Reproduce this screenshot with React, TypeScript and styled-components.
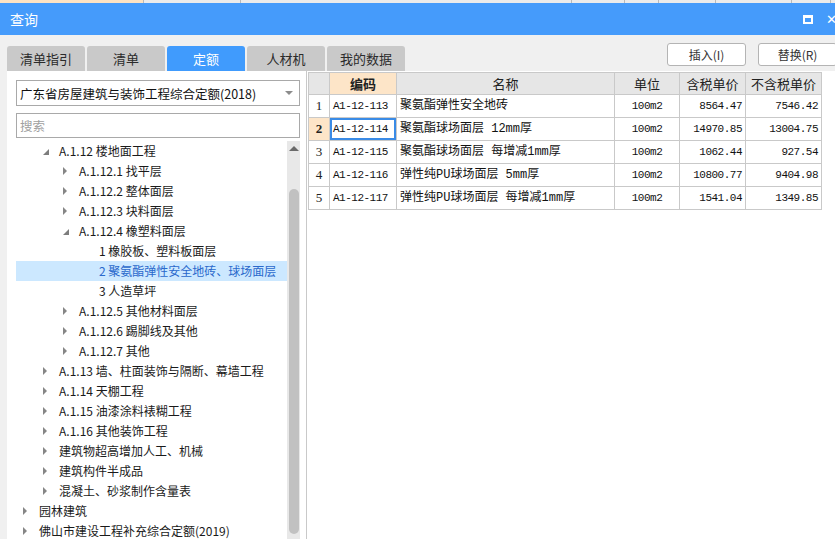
import React from 'react';
import styled, { createGlobalStyle } from 'styled-components';

const GlobalStyle = createGlobalStyle`
  html, body {
    margin: 0;
    padding: 0;
    overflow: hidden;
    background: #f0f0f0;
  }
  body {
    font-family: "Noto Sans CJK SC", "Noto Sans", sans-serif;
  }
  * { box-sizing: border-box; }
`;

const Window = styled.div`
  width: 835px;
  height: 539px;
  display: flex;
  flex-direction: column;
  background: #f0f0f0;
  overflow: hidden;
`;

const BackStrip = styled.div`
  display: flex;
  height: 3px;
  background: #e9e9e9;
`;

const BackCell = styled.div<{ $w: number; $hl?: boolean }>`
  width: ${(p) => p.$w}px;
  flex-shrink: 0;
  background: ${(p) => (p.$hl ? '#fde3c3' : '#ebebeb')};
  border-right: 1px solid #b9b9b9;
`;

const TitleBar = styled.div`
  height: 32px;
  background: #459bfb;
  color: #fff;
  display: flex;
  align-items: center;
  padding-left: 10px;
  font-size: 14px;
  overflow: hidden;
`;

const TitleText = styled.span`
  flex: 1;
`;

const MaxIcon = styled.span`
  flex-shrink: 0;
  width: 10px;
  height: 9px;
  border: 2px solid #fff;
  border-top-width: 3px;
  margin-right: 13px;
`;

const CloseIcon = styled.span`
  flex-shrink: 0;
  width: 12px;
  margin-right: -3px;
  font-family: "DejaVu Sans", sans-serif;
  font-size: 13px;
  font-weight: 700;
  line-height: 1;
  color: #fff;
`;

const TopRow = styled.div`
  height: 36px;
  display: flex;
  justify-content: space-between;
`;

const Tabs = styled.div`
  align-self: flex-end;
  display: flex;
  gap: 2px;
  padding-left: 7px;
`;

const Tab = styled.div<{ $active?: boolean }>`
  width: 78px;
  height: 25px;
  border-radius: 3px 3px 0 0;
  background: ${(p) => (p.$active ? '#409bfd' : '#c9c9c9')};
  color: ${(p) => (p.$active ? '#fff' : '#2b2b2b')};
  font-size: 13px;
  display: flex;
  align-items: center;
  justify-content: center;
`;

const Buttons = styled.div`
  display: flex;
  gap: 12px;
  margin-top: 8px;
  margin-right: -2px;
  align-self: flex-start;
`;

const Button = styled.div`
  width: 79px;
  height: 23px;
  background: #fff;
  border: 1px solid #b4b4b4;
  border-radius: 3px;
  font-size: 12px;
  color: #333;
  display: flex;
  align-items: center;
  justify-content: center;
`;

const Body = styled.div`
  flex: 1;
  display: flex;
  min-height: 0;
  padding-left: 7px;
`;

const LeftPanel = styled.div`
  width: 299px;
  background: #fff;
  display: flex;
  flex-direction: column;
  padding: 9px 6px 0 9px;
`;

const Select = styled.div`
  height: 26px;
  border: 1px solid #a9a9a9;
  display: flex;
  align-items: center;
  justify-content: space-between;
  padding: 0 6px 0 3px;
  font-size: 12.5px;
  color: #111;
`;

const SelectArrow = styled.span`
  width: 0;
  height: 0;
  border-left: 4px solid transparent;
  border-right: 4px solid transparent;
  border-top: 4px solid #8c8c8c;
`;

const Search = styled.input`
  margin-top: 7px;
  height: 25px;
  border: 1px solid #a9a9a9;
  padding: 0 0 0 3px;
  font-family: inherit;
  font-size: 12.5px;
  outline: none;
  &::placeholder { color: #a0a0a0; }
`;

const TreeArea = styled.div`
  margin-top: 3px;
  flex: 1;
  display: flex;
  min-height: 0;
  overflow: hidden;
`;

const TreeList = styled.div`
  width: 271px;
  display: flex;
  flex-direction: column;
`;

const TreeRow = styled.div<{ $selected?: boolean }>`
  height: 20px;
  flex-shrink: 0;
  display: flex;
  align-items: center;
  font-size: 12px;
  line-height: 20px;
  white-space: nowrap;
  color: ${(p) => (p.$selected ? '#2a69cc' : '#1a1a1a')};
  background: ${(p) => (p.$selected ? '#cce8ff' : 'transparent')};
`;

const Toggle = styled.span<{ $level: number }>`
  width: 23px;
  margin-left: ${(p) => p.$level * 20}px;
  height: 20px;
  flex-shrink: 0;
  display: flex;
  align-items: center;
  padding-left: 7px;
`;

const Collapsed = styled.span`
  width: 0;
  height: 0;
  border-top: 4px solid transparent;
  border-bottom: 4px solid transparent;
  border-left: 4px solid #868686;
`;

const Expanded = styled.span`
  width: 0;
  height: 0;
  margin-top: 2px;
  border-left: 6px solid transparent;
  border-bottom: 6px solid #7d7d7d;
`;

const ScrollBar = styled.div`
  width: 13px;
  background: #e8e8e8;
  display: flex;
  flex-direction: column;
  align-items: center;
`;

const ScrollUp = styled.div`
  height: 15px;
  display: flex;
  align-items: center;
  &::after {
    content: '';
    border-left: 5px solid transparent;
    border-right: 5px solid transparent;
    border-bottom: 5px solid #6a6a6a;
  }
`;

const ScrollThumb = styled.div`
  margin-top: 33px;
  width: 10px;
  height: 345px;
  flex-shrink: 0;
  border-radius: 5px;
  background: #c1c1c1;
`;

const RightPanel = styled.div`
  flex: 1;
  background: #fff;
  border-left: 1px solid #c9c9c9;
  padding: 1px 0 0 1px;
`;

const Grid = styled.table`
  border-collapse: collapse;
  table-layout: fixed;
  width: 513px;
  border: 1px solid #c6c6c6;
`;

const HeadCell = styled.th<{ $active?: boolean }>`
  height: 22px;
  padding: 0;
  border: 1px solid #c9c9c9;
  background: ${(p) => (p.$active ? '#fde5c8' : '#e6e6e6')};
  font-size: 13px;
  font-weight: ${(p) => (p.$active ? 700 : 400)};
  color: #222;
  line-height: 20px;
`;

const Cell = styled.td<{ $align?: 'left' | 'center' | 'right'; $focus?: boolean; $mono?: boolean }>`
  height: 23px;
  padding: 0 3px;
  border: 1px solid #c9c9c9;
  text-align: ${(p) => p.$align || 'left'};
  font-family: "Liberation Mono", "Noto Sans CJK SC", monospace;
  font-size: ${(p) => (p.$mono ? '11px' : '12px')};
  letter-spacing: ${(p) => (p.$mono ? '-0.5px' : '0')};
  color: #111;
  white-space: nowrap;
  overflow: hidden;
  line-height: 20px;
  box-shadow: ${(p) => (p.$focus ? 'inset 0 0 0 2px #3a8be6' : 'none')};
`;

const NumCell = styled.td<{ $active?: boolean }>`
  height: 23px;
  padding: 0;
  border: 1px solid #c9c9c9;
  text-align: center;
  font-family: "Liberation Serif", serif;
  font-size: 13px;
  font-weight: ${(p) => (p.$active ? 700 : 400)};
  background: ${(p) => (p.$active ? '#fde5c8' : '#fff')};
  color: #222;
`;

type Node = { level: number; label: string; state: 'open' | 'closed' | 'leaf'; selected?: boolean };

const tree: Node[] = [
  { level: 1, label: 'A.1.12 楼地面工程', state: 'open' },
  { level: 2, label: 'A.1.12.1 找平层', state: 'closed' },
  { level: 2, label: 'A.1.12.2 整体面层', state: 'closed' },
  { level: 2, label: 'A.1.12.3 块料面层', state: 'closed' },
  { level: 2, label: 'A.1.12.4 橡塑料面层', state: 'open' },
  { level: 3, label: '1 橡胶板、塑料板面层', state: 'leaf' },
  { level: 3, label: '2 聚氨酯弹性安全地砖、球场面层', state: 'leaf', selected: true },
  { level: 3, label: '3 人造草坪', state: 'leaf' },
  { level: 2, label: 'A.1.12.5 其他材料面层', state: 'closed' },
  { level: 2, label: 'A.1.12.6 踢脚线及其他', state: 'closed' },
  { level: 2, label: 'A.1.12.7 其他', state: 'closed' },
  { level: 1, label: 'A.1.13 墙、柱面装饰与隔断、幕墙工程', state: 'closed' },
  { level: 1, label: 'A.1.14 天棚工程', state: 'closed' },
  { level: 1, label: 'A.1.15 油漆涂料裱糊工程', state: 'closed' },
  { level: 1, label: 'A.1.16 其他装饰工程', state: 'closed' },
  { level: 1, label: '建筑物超高增加人工、机械', state: 'closed' },
  { level: 1, label: '建筑构件半成品', state: 'closed' },
  { level: 1, label: '混凝土、砂浆制作含量表', state: 'closed' },
  { level: 0, label: '园林建筑', state: 'closed' },
  { level: 0, label: '佛山市建设工程补充综合定额(2019)', state: 'closed' },
];

const rows = [
  { code: 'A1-12-113', name: '聚氨酯弹性安全地砖', unit: '100m2', tax: '8564.47', net: '7546.42' },
  { code: 'A1-12-114', name: '聚氨酯球场面层 12mm厚', unit: '100m2', tax: '14970.85', net: '13004.75' },
  { code: 'A1-12-115', name: '聚氨酯球场面层 每增减1mm厚', unit: '100m2', tax: '1062.44', net: '927.54' },
  { code: 'A1-12-116', name: '弹性纯PU球场面层 5mm厚', unit: '100m2', tax: '10800.77', net: '9404.98' },
  { code: 'A1-12-117', name: '弹性纯PU球场面层 每增减1mm厚', unit: '100m2', tax: '1541.04', net: '1349.85' },
];

const backCells = [144, 97, 331, 53, 34, 57, 76, 39, 10];

export default function App() {
  return (
    <Window>
      <GlobalStyle />
      <BackStrip>
        {backCells.map((w, i) => (
          <BackCell key={i} $w={w} $hl={i === 0} />
        ))}
      </BackStrip>

      <TitleBar>
        <TitleText>查询</TitleText>
        <MaxIcon />
        <CloseIcon>✕</CloseIcon>
      </TitleBar>

      <TopRow>
        <Tabs>
          <Tab>清单指引</Tab>
          <Tab>清单</Tab>
          <Tab $active>定额</Tab>
          <Tab>人材机</Tab>
          <Tab>我的数据</Tab>
        </Tabs>
        <Buttons>
          <Button>插入(I)</Button>
          <Button>替换(R)</Button>
        </Buttons>
      </TopRow>

      <Body>
        <LeftPanel>
          <Select>
            <span>广东省房屋建筑与装饰工程综合定额(2018)</span>
            <SelectArrow />
          </Select>
          <Search placeholder="搜索" />
          <TreeArea>
            <TreeList>
              {tree.map((n, i) => (
                <TreeRow key={i} $selected={n.selected}>
                  <Toggle $level={n.level}>
                    {n.state === 'open' && <Expanded />}
                    {n.state === 'closed' && <Collapsed />}
                  </Toggle>
                  <span>{n.label}</span>
                </TreeRow>
              ))}
            </TreeList>
            <ScrollBar>
              <ScrollUp />
              <ScrollThumb />
            </ScrollBar>
          </TreeArea>
        </LeftPanel>

        <RightPanel>
          <Grid>
            <colgroup>
              <col style={{ width: 21 }} />
              <col style={{ width: 67 }} />
              <col style={{ width: 218 }} />
              <col style={{ width: 65 }} />
              <col style={{ width: 66 }} />
              <col style={{ width: 76 }} />
            </colgroup>
            <thead>
              <tr>
                <HeadCell />
                <HeadCell $active>编码</HeadCell>
                <HeadCell>名称</HeadCell>
                <HeadCell>单位</HeadCell>
                <HeadCell>含税单价</HeadCell>
                <HeadCell>不含税单价</HeadCell>
              </tr>
            </thead>
            <tbody>
              {rows.map((r, i) => (
                <tr key={r.code}>
                  <NumCell $active={i === 1}>{i + 1}</NumCell>
                  <Cell $mono $focus={i === 1}>{r.code}</Cell>
                  <Cell>{r.name}</Cell>
                  <Cell $mono $align="center">{r.unit}</Cell>
                  <Cell $mono $align="right">{r.tax}</Cell>
                  <Cell $mono $align="right">{r.net}</Cell>
                </tr>
              ))}
            </tbody>
          </Grid>
        </RightPanel>
      </Body>
    </Window>
  );
}
